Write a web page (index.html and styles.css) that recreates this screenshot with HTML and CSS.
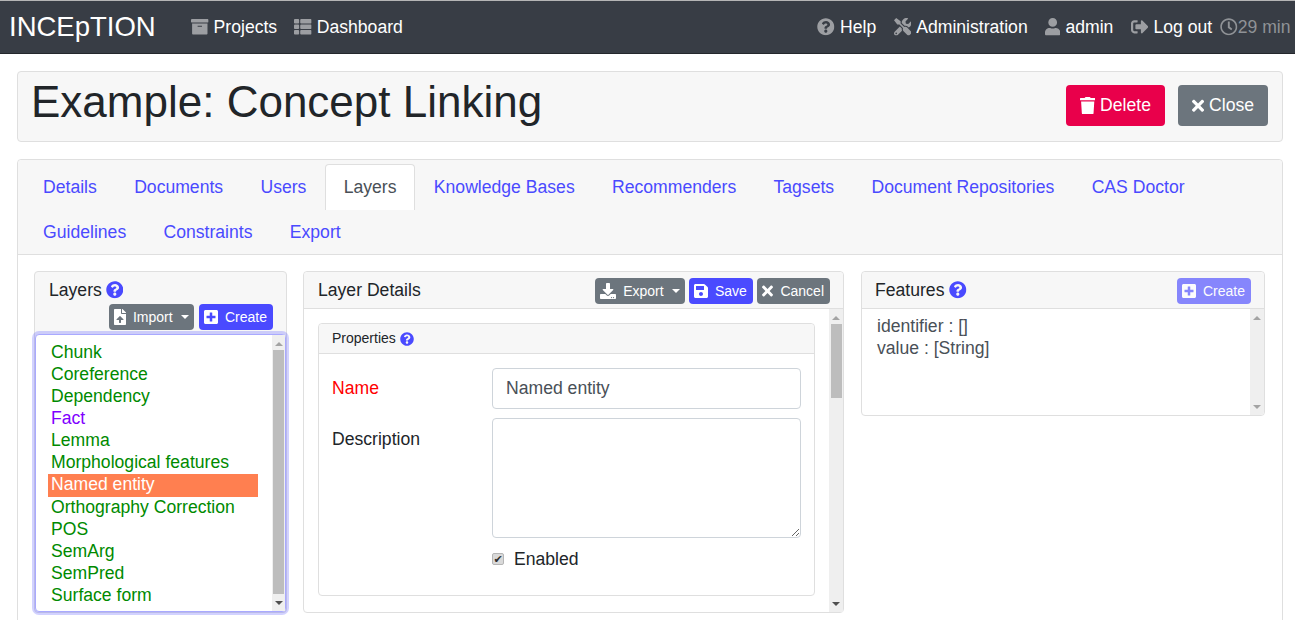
FILE: index.html
```html
<!DOCTYPE html>
<html lang="en">
<head>
<meta charset="utf-8">
<title>INCEpTION</title>
<link rel="stylesheet" href="styles.css">
</head>
<body>
<svg class="defs" aria-hidden="true">
  <symbol id="i-archive" viewBox="0 0 512 512"><path d="M32 448c0 17.7 14.3 32 32 32h384c17.7 0 32-14.3 32-32V160H32v288zm160-212c0-6.6 5.4-12 12-12h104c6.6 0 12 5.4 12 12v8c0 6.6-5.4 12-12 12H204c-6.6 0-12-5.4-12-12v-8zM480 32H32C14.3 32 0 46.3 0 64v48c0 8.8 7.2 16 16 16h480c8.8 0 16-7.2 16-16V64c0-17.7-14.3-32-32-32z"/></symbol>
  <symbol id="i-thlist" viewBox="0 0 512 512"><path d="M149.333 216v80c0 13.255-10.745 24-24 24H24c-13.255 0-24-10.745-24-24v-80c0-13.255 10.745-24 24-24h101.333c13.255 0 24 10.745 24 24zM0 376v80c0 13.255 10.745 24 24 24h101.333c13.255 0 24-10.745 24-24v-80c0-13.255-10.745-24-24-24H24c-13.255 0-24 10.745-24 24zM125.333 32H24C10.745 32 0 42.745 0 56v80c0 13.255 10.745 24 24 24h101.333c13.255 0 24-10.745 24-24V56c0-13.255-10.745-24-24-24zm80 448H488c13.255 0 24-10.745 24-24v-80c0-13.255-10.745-24-24-24H205.333c-13.255 0-24 10.745-24 24v80c0 13.255 10.745 24 24 24zm-24-424v80c0 13.255 10.745 24 24 24H488c13.255 0 24-10.745 24-24V56c0-13.255-10.745-24-24-24H205.333c-13.255 0-24 10.745-24 24zm24 264H488c13.255 0 24-10.745 24-24v-80c0-13.255-10.745-24-24-24H205.333c-13.255 0-24 10.745-24 24v80c0 13.255 10.745 24 24 24z"/></symbol>
  <symbol id="i-help" viewBox="0 0 512 512"><path d="M504 256c0 136.997-111.043 248-248 248S8 392.997 8 256C8 119.083 119.043 8 256 8s248 111.083 248 248zM262.655 90c-54.497 0-89.255 22.957-116.549 63.758-3.536 5.286-2.353 12.415 2.715 16.258l34.699 26.31c5.205 3.947 12.621 3.008 16.665-2.122 17.864-22.658 30.113-35.797 57.303-35.797 20.429 0 45.698 13.148 45.698 32.958 0 14.976-12.363 22.667-32.534 33.976C247.128 238.528 216 254.941 216 296v4c0 6.627 5.373 12 12 12h56c6.627 0 12-5.373 12-12v-1.333c0-28.462 83.186-29.647 83.186-106.667 0-58.002-60.165-102-116.531-102zM256 338c-25.365 0-46 20.635-46 46 0 25.364 20.635 46 46 46s46-20.636 46-46c0-25.365-20.635-46-46-46z"/></symbol>
  <symbol id="i-tools" viewBox="0 0 512 512"><path d="M501.1 395.7L384 278.6c-23.1-23.1-57.6-27.6-85.4-13.9L192 158.1V96L64 0 0 64l96 128h62.1l106.6 106.6c-13.6 27.8-9.2 62.3 13.9 85.4l117.1 117.1c14.6 14.6 38.2 14.6 52.7 0l52.7-52.7c14.5-14.6 14.5-38.2 0-52.7zM331.7 225c28.3 0 54.9 11 74.9 31l19.4 19.4c15.8-6.9 30.8-16.5 43.8-29.5 37.1-37.1 49.7-89.3 37.9-136.7-2.2-9-13.5-12.1-20.1-5.5l-74.4 74.4-67.9-11.3L334 98.9l74.4-74.4c6.6-6.6 3.4-17.9-5.7-20.2-47.4-11.7-99.6.9-136.6 37.9-28.5 28.5-41.9 66.1-41.2 103.6l82.1 82.1c8.1-1.9 16.5-2.9 24.7-2.9zm-103.9 82l-56.7-56.7L18.7 402.8c-25 25-25 65.5 0 90.5s65.5 25 90.5 0l123.6-123.6c-7.6-19.9-9.9-41.6-5-62.7zM64 472c-13.2 0-24-10.8-24-24 0-13.3 10.7-24 24-24s24 10.7 24 24c0 13.2-10.7 24-24 24z"/></symbol>
  <symbol id="i-user" viewBox="0 0 448 512"><path d="M224 256c70.7 0 128-57.3 128-128S294.7 0 224 0 96 57.3 96 128s57.3 128 128 128zm89.6 32h-16.7c-22.2 10.2-46.9 16-72.9 16s-50.6-5.8-72.9-16h-16.7C60.2 288 0 348.2 0 422.4V464c0 26.5 21.5 48 48 48h352c26.5 0 48-21.5 48-48v-41.6c0-74.2-60.2-134.4-134.4-134.4z"/></symbol>
  <symbol id="i-signout" viewBox="0 0 512 512"><path d="M497 273L329 441c-15 15-41 4.5-41-17v-96H152c-13.3 0-24-10.7-24-24v-96c0-13.3 10.7-24 24-24h136V88c0-21.4 25.9-32 41-17l168 168c9.3 9.4 9.3 24.6 0 34zM192 436v-40c0-6.6-5.4-12-12-12H96c-17.7 0-32-14.3-32-32V160c0-17.7 14.3-32 32-32h84c6.6 0 12-5.4 12-12V76c0-6.6-5.4-12-12-12H96c-53 0-96 43-96 96v192c0 53 43 96 96 96h84c6.6 0 12-5.4 12-12z"/></symbol>
  <symbol id="i-clock" viewBox="0 0 512 512"><path d="M256 8C119 8 8 119 8 256s111 248 248 248 248-111 248-248S393 8 256 8zm0 448c-110.5 0-200-89.5-200-200S145.5 56 256 56s200 89.5 200 200-89.5 200-200 200zm61.8-104.4l-84.9-61.7c-3.1-2.3-4.9-5.9-4.9-9.7V116c0-6.6 5.4-12 12-12h32c6.6 0 12 5.4 12 12v141.7l66.8 48.6c5.4 3.9 6.5 11.4 2.6 16.8L334.6 349c-3.9 5.3-11.4 6.5-16.8 2.6z"/></symbol>
  <symbol id="i-trash" viewBox="0 0 448 512"><path d="M432 32H312l-9.4-18.7A24 24 0 0 0 281.1 0H166.8a23.72 23.72 0 0 0-21.4 13.3L136 32H16A16 16 0 0 0 0 48v32a16 16 0 0 0 16 16h416a16 16 0 0 0 16-16V48a16 16 0 0 0-16-16zM53.2 467a48 48 0 0 0 47.9 45h245.8a48 48 0 0 0 47.9-45L416 128H32z"/></symbol>
  <symbol id="i-times" viewBox="0 0 352 512"><path d="M242.72 256l100.07-100.07c12.28-12.28 12.28-32.19 0-44.48l-22.24-22.24c-12.28-12.28-32.19-12.28-44.48 0L176 189.28 75.93 89.21c-12.28-12.28-32.19-12.28-44.48 0L9.21 111.45c-12.28 12.28-12.28 32.19 0 44.48L109.28 256 9.21 356.07c-12.28 12.28-12.28 32.19 0 44.48l22.24 22.24c12.28 12.28 32.2 12.28 44.48 0L176 322.72l100.07 100.07c12.28 12.28 32.2 12.28 44.48 0l22.24-22.24c12.28-12.28 12.28-32.19 0-44.48L242.72 256z"/></symbol>
  <symbol id="i-plus" viewBox="0 0 448 512"><path d="M400 32H48C21.5 32 0 53.5 0 80v352c0 26.5 21.5 48 48 48h352c26.5 0 48-21.5 48-48V80c0-26.5-21.5-48-48-48zm-32 252c0 6.6-5.4 12-12 12h-92v92c0 6.6-5.4 12-12 12h-56c-6.6 0-12-5.4-12-12v-92H92c-6.6 0-12-5.4-12-12v-56c0-6.6 5.4-12 12-12h92v-92c0-6.6 5.4-12 12-12h56c6.6 0 12 5.4 12 12v92h92c6.6 0 12 5.4 12 12v56z"/></symbol>
  <symbol id="i-save" viewBox="0 0 448 512"><path d="M433.941 129.941l-83.882-83.882A48 48 0 0 0 316.118 32H48C21.49 32 0 53.49 0 80v352c0 26.51 21.49 48 48 48h352c26.51 0 48-21.49 48-48V163.882a48 48 0 0 0-14.059-33.941zM224 416c-35.346 0-64-28.654-64-64 0-35.346 28.654-64 64-64s64 28.654 64 64c0 35.346-28.654 64-64 64zm96-304.52V212c0 6.627-5.373 12-12 12H76c-6.627 0-12-5.373-12-12V108c0-6.627 5.373-12 12-12h228.52c3.183 0 6.235 1.264 8.485 3.515l3.48 3.48A11.996 11.996 0 0 1 320 111.48z"/></symbol>
  <symbol id="i-download" viewBox="0 0 512 512"><path d="M216 0h80c13.3 0 24 10.7 24 24v168h87.7c17.8 0 26.7 21.5 14.1 34.1L269.7 378.3c-7.5 7.5-19.8 7.5-27.3 0L90.1 226.1c-12.6-12.6-3.7-34.1 14.1-34.1H192V24c0-13.3 10.7-24 24-24zm296 376v112c0 13.3-10.7 24-24 24H24c-13.3 0-24-10.7-24-24V376c0-13.3 10.7-24 24-24h146.7l49 49c20.1 20.1 52.5 20.1 72.6 0l49-49H488c13.3 0 24 10.7 24 24zm-124 88c0-11-9-20-20-20s-20 9-20 20 9 20 20 20 20-9 20-20zm64 0c0-11-9-20-20-20s-20 9-20 20 9 20 20 20 20-9 20-20z"/></symbol>
  <symbol id="i-upload" viewBox="0 0 384 512"><path d="M224 136V0H24C10.7 0 0 10.7 0 24v464c0 13.3 10.7 24 24 24h336c13.3 0 24-10.7 24-24V160H248c-13.2 0-24-10.8-24-24zm65.18 216.01H224v80c0 8.84-7.16 16-16 16h-32c-8.84 0-16-7.16-16-16v-80H94.82c-14.28 0-21.41-17.29-11.27-27.36l96.42-95.7c6.65-6.61 17.39-6.61 24.04 0l96.42 95.7c10.15 10.07 3.03 27.36-11.25 27.36zM377 105L279.1 7c-4.5-4.5-10.6-7-17-7H256v128h128v-6.1c0-6.3-2.5-12.4-7-16.9z"/></symbol>
</svg>

<nav class="navbar">
  <a class="brand">INCEpTION</a>
  <div class="nav-group nav-main">
    <a class="nav-item"><svg class="icon"><use href="#i-archive"/></svg>Projects</a>
    <a class="nav-item"><svg class="icon"><use href="#i-thlist"/></svg>Dashboard</a>
  </div>
  <div class="nav-group nav-side">
    <a class="nav-item"><svg class="icon"><use href="#i-help"/></svg>Help</a>
    <a class="nav-item"><svg class="icon"><use href="#i-tools"/></svg>Administration</a>
    <a class="nav-item"><svg class="icon w-448"><use href="#i-user"/></svg>admin</a>
    <a class="nav-item"><svg class="icon"><use href="#i-signout"/></svg>Log out</a>
    <span class="timer"><svg class="icon"><use href="#i-clock"/></svg>29 min</span>
  </div>
</nav>

<main class="page">
  <header class="title-card">
    <h1 class="title">Example: Concept Linking</h1>
    <div class="title-actions">
      <button class="btn btn-danger"><svg class="icon w-448"><use href="#i-trash"/></svg>Delete</button>
      <button class="btn btn-secondary"><svg class="icon w-352"><use href="#i-times"/></svg>Close</button>
    </div>
  </header>

  <section class="tabs-card">
    <ul class="tabs">
      <li class="tab">Details</li>
      <li class="tab">Documents</li>
      <li class="tab">Users</li>
      <li class="tab active">Layers</li>
      <li class="tab">Knowledge Bases</li>
      <li class="tab">Recommenders</li>
      <li class="tab">Tagsets</li>
      <li class="tab">Document Repositories</li>
      <li class="tab">CAS Doctor</li>
      <li class="tab">Guidelines</li>
      <li class="tab">Constraints</li>
      <li class="tab">Export</li>
    </ul>

    <div class="panels">
      <article class="panel panel-layers">
        <div class="layers-head">
          <div class="panel-title">Layers <svg class="icon help"><use href="#i-help"/></svg></div>
          <div class="layers-actions">
            <button class="btn-sm btn-secondary"><svg class="icon w-384"><use href="#i-upload"/></svg>Import<span class="caret"></span></button>
            <button class="btn-sm btn-primary"><svg class="icon w-448"><use href="#i-plus"/></svg>Create</button>
          </div>
        </div>
        <div class="layer-select">
          <ul class="layer-list">
            <li>Chunk</li>
            <li>Coreference</li>
            <li>Dependency</li>
            <li class="chain">Fact</li>
            <li>Lemma</li>
            <li>Morphological features</li>
            <li class="selected">Named entity</li>
            <li>Orthography Correction</li>
            <li>POS</li>
            <li>SemArg</li>
            <li>SemPred</li>
            <li>Surface form</li>
          </ul>
          <div class="scrollbar"><span class="arrow-up"></span><span class="thumb thumb-full"></span><span class="arrow-down"></span></div>
        </div>
      </article>

      <article class="panel panel-details">
        <div class="panel-head">
          <div class="panel-title">Layer Details</div>
          <div class="head-actions">
            <button class="btn-sm btn-secondary"><svg class="icon"><use href="#i-download"/></svg>Export<span class="caret"></span></button>
            <button class="btn-sm btn-primary"><svg class="icon w-448"><use href="#i-save"/></svg>Save</button>
            <button class="btn-sm btn-secondary"><svg class="icon w-352"><use href="#i-times"/></svg>Cancel</button>
          </div>
        </div>
        <div class="details-scroll">
          <div class="details-body">
            <div class="subcard">
              <div class="subcard-head">Properties <svg class="icon help"><use href="#i-help"/></svg></div>
              <div class="form">
                <label class="form-label required">Name</label>
                <input class="control" type="text" value="Named entity">
                <label class="form-label">Description</label>
                <textarea class="control area"></textarea>
                <span></span>
                <label class="check"><input type="checkbox" checked disabled>Enabled</label>
              </div>
            </div>
          </div>
          <div class="scrollbar"><span class="arrow-up"></span><span class="thumb thumb-short"></span><span class="arrow-down"></span></div>
        </div>
      </article>

      <article class="panel panel-features">
        <div class="panel-head">
          <div class="panel-title">Features <svg class="icon help"><use href="#i-help"/></svg></div>
          <div class="head-actions">
            <button class="btn-sm btn-primary disabled"><svg class="icon w-448"><use href="#i-plus"/></svg>Create</button>
          </div>
        </div>
        <div class="features-scroll">
          <ul class="feature-list">
            <li>identifier : []</li>
            <li>value : [String]</li>
          </ul>
          <div class="scrollbar"><span class="arrow-up"></span><span class="spacer"></span><span class="arrow-down"></span></div>
        </div>
      </article>
    </div>
  </section>
</main>
</body>
</html>
```

FILE: styles.css
```css
* { box-sizing: border-box; }
html, body { margin: 0; height: 620px; overflow: hidden; }
body {
  font-family: "Liberation Sans", Arial, sans-serif;
  font-size: 17.6px;
  line-height: 1.5;
  color: #212529;
  background: #fff;
}
.defs { display: none; }
ul { list-style: none; margin: 0; padding: 0; }
button { font-family: inherit; cursor: pointer; }

.icon { width: 1em; height: 1em; fill: currentColor; flex: none; }
.w-448 { width: .875em; }
.w-384 { width: .75em; }
.w-352 { width: .6875em; }

/* Navbar */
.navbar {
  height: 54px;
  display: flex;
  align-items: center;
  background: #383d45;
  border-top: 1px solid #b5b5b5;
  border-bottom: 1px solid #24272c;
  padding: 0 4.5px 0 9px;
  color: #fff;
}
.brand { font-size: 27.5px; line-height: 1; width: 182px; }
.nav-group { display: flex; align-items: center; gap: 17px; }
.nav-side { margin-left: auto; gap: 17.4px; }
.nav-item { display: flex; align-items: center; gap: 5px; color: #fff; }
.nav-item .icon { color: #9c9ea2; }
.timer { display: flex; align-items: center; color: #8f9296; margin-left: -9.4px; }

/* Title */
.page { padding: 17px 12px 0 17px; height: 566px; overflow: hidden; }
.title-card {
  height: 71px;
  display: flex;
  justify-content: space-between;
  align-items: flex-start;
  background: #f7f7f7;
  border: 1px solid #dfdfdf;
  border-radius: 4px;
  padding: 13px 14px 0 13px;
}
.title { margin: -9px 0 0; font-size: 44px; font-weight: 400; line-height: 1.2; }
.title-actions { display: flex; gap: 13px; }
.btn {
  display: flex;
  align-items: center;
  gap: 5px;
  height: 41px;
  padding: 0 14px;
  border: 0;
  border-radius: 4px;
  font-size: 17.6px;
  color: #fff;
}
.btn-danger { background: #e9004b; }
.btn-secondary { background: #6c757d; color: #fff; }
.btn-primary { background: #4a4aff; color: #fff; }

/* Tabs */
.tabs-card {
  margin-top: 17px;
  height: 470px;
  background: #fff;
  border: 1px solid #dfdfdf;
  border-radius: 4px;
}
.tabs {
  display: flex;
  flex-wrap: wrap;
  background: #f7f7f7;
  border-bottom: 1px solid #dfdfdf;
  padding: 4px 6.4px 0;
  border-radius: 4px 4px 0 0;
}
.tab {
  padding: 9px 17.66px 0;
  line-height: 26.4px;
  color: #4a4aff;
  height: 45px;
  border: 1px solid transparent;
  border-bottom: 0;
}
.tab.active {
  color: #495057;
  background: #fff;
  border-color: #dfdfdf;
  border-radius: 4px 4px 0 0;
  height: 46px;
  margin-bottom: -1px;
  position: relative;
  z-index: 1;
}

/* Panels */
.panels { display: flex; align-items: flex-start; padding: 16px 0 0 16px; }
.panel {
  background: #fff;
  border: 1px solid #dfdfdf;
  border-radius: 4px;
}
.panel-layers { width: 253px; height: 342px; margin-right: 16px; display: flex; flex-direction: column; background: #f7f7f7; }
.panel-details { width: 541px; height: 342px; margin-right: 17px; display: flex; flex-direction: column; }
.panel-features { width: 404px; height: 145px; display: flex; flex-direction: column; }
.panel-head {
  height: 37px;
  flex: none;
  display: flex;
  justify-content: space-between;
  align-items: center;
  background: #f7f7f7;
  border-bottom: 1px solid #dfdfdf;
  padding: 0 13px 0 14px;
  border-radius: 4px 4px 0 0;
}
.panel-features .panel-head { padding-left: 13px; }
.panel-title { display: flex; align-items: center; gap: 5px; font-size: 17.6px; line-height: 26px; }
.layers-head .panel-title { gap: 4px; }
.help { color: #4a4aff; }
.head-actions { display: flex; gap: 4px; margin-top: 2px; }
.head-actions .btn-sm:last-child:not(:first-child) { margin-left: .5px; }
.layers-head { padding: 5px 13px 0 14px; height: 62px; flex: none; }
.layers-actions { display: flex; justify-content: flex-end; gap: 5px; margin-top: 1px; }
.btn-sm {
  display: flex;
  align-items: center;
  gap: 7px;
  height: 26px;
  padding: 0 6px 0 5px;
  border: 0;
  border-radius: 4px;
  font-size: 14px;
  line-height: 1;
  white-space: nowrap;
}
.btn-sm .icon { font-size: 16px; }
.disabled { opacity: .65; }
.caret {
  width: 0;
  height: 0;
  border-left: 4px solid transparent;
  border-right: 4px solid transparent;
  border-top: 4.5px solid currentColor;
  margin: 0 -.7px 0 1px;
}

/* Layer select */
.layer-select {
  display: flex;
  height: 278px;
  background: #fff;
  border: 1px solid #a9a9ff;
  border-radius: 4px;
  box-shadow: 0 0 0 3px rgba(74, 74, 255, .25);
  position: relative;
}
.layer-list { flex: 1; padding: 5.95px 14px 0 12px; }
.layer-list li {
  height: 22.1px;
  line-height: 22.1px;
  padding-left: 3px;
  color: #008a00;
}
.layer-list .chain { color: #7f00ff; }
.layer-list .selected {
  background: #ff7f50;
  color: #fff;
  height: 23px;
  margin-bottom: -.9px;
  line-height: 20.1px;
}
.layer-select .scrollbar { width: 13px; }

/* Scrollbars */
.scrollbar {
  width: 14px;
  flex: none;
  display: flex;
  flex-direction: column;
  align-items: center;
  background: #efefef;
}
.arrow-up, .arrow-down { width: 0; height: 0; flex: none; border-left: 4px solid transparent; border-right: 4px solid transparent; }
.arrow-up { border-bottom: 4px solid #a3a3a3; margin: 7px 0 4px; }
.arrow-down { border-top: 4px solid #505050; margin: 7px 0 6px; }
.thumb { width: 11px; background: #bdbdbd; }
.thumb-full { flex: 1; }
.thumb-short { height: 74px; margin-bottom: auto; }
.spacer { flex: 1; }
.panel-features .arrow-down { border-top-color: #a3a3a3; }

/* Details */
.details-scroll { flex: 1; display: flex; min-height: 0; }
.details-body { flex: 1; padding: 14px 14px 0; }
.subcard { height: 273px; border: 1px solid #dfdfdf; border-radius: 4px; }
.subcard-head {
  height: 30px;
  display: flex;
  align-items: center;
  gap: 4px;
  padding-left: 13px;
  font-size: 14px;
  background: #f7f7f7;
  border-bottom: 1px solid #dfdfdf;
  border-radius: 4px 4px 0 0;
}
.subcard-head .icon { width: 14px; height: 14px; }
.form {
  display: grid;
  grid-template-columns: 160px 309px;
  grid-template-rows: 41px 120px auto;
  row-gap: 9px;
  padding: 14px 0 0 13px;
}
.form-label { line-height: 26px; padding-top: 7px; }
.form-label:not(.required) { padding-top: 8px; }
.required { color: #f00; }
.control {
  width: 100%;
  border: 1px solid #ced4da;
  border-radius: 4px;
  padding: 0 13px;
  font: 17.6px "Liberation Sans", Arial, sans-serif;
  color: #495057;
  background: #fff;
}
.area { height: 120px; resize: vertical; display: block; }
.check { display: flex; align-items: center; gap: 10px; margin-top: -1px; line-height: 26px; }
.check input {
  appearance: none;
  width: 12px;
  height: 12px;
  margin: 0;
  display: flex;
  align-items: center;
  justify-content: center;
  background: #d9d9d9;
  border: 1px solid #b5b5b5;
  border-radius: 2px;
}
.check input::after {
  content: "\2714";
  font: 11px/1 "DejaVu Sans", sans-serif;
  color: #2e2e2e;
}

/* Features */
.features-scroll { flex: 1; display: flex; min-height: 0; border-radius: 0 0 4px 4px; overflow: hidden; }
.feature-list { flex: 1; padding: 6px 0 0 15px; color: #495057; }
.feature-list li { height: 22px; line-height: 22px; }
```
